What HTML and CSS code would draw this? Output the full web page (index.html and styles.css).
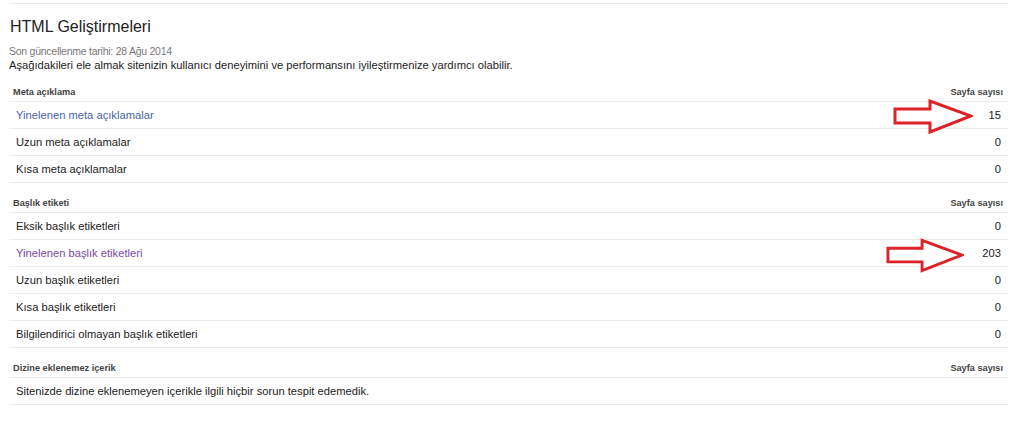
FILE: index.html
```html
<!DOCTYPE html>
<html lang="tr">
<head>
    <meta charset="UTF-8">
    <meta name="viewport" content="width=device-width, initial-scale=1.0">
    <title>HTML Geliştirmeleri</title>
    <link rel="stylesheet" href="styles.css">
</head>
<body>
    <div class="page">
        <h1>HTML Geliştirmeleri</h1>
        <div class="updated">Son güncellenme tarihi: 28 Ağu 2014</div>
        <div class="intro">Aşağıdakileri ele almak sitenizin kullanıcı deneyimini ve performansını iyileştirmenize yardımcı olabilir.</div>

        <div class="section">
            <div class="head">
                <span>Meta açıklama</span>
                <span>Sayfa sayısı</span>
            </div>
            <div class="row">
                <a class="link" href="#">Yinelenen meta açıklamalar</a>
                <span class="count">15</span>
                <svg class="arrow arrow-one" viewBox="0 0 80 36" width="80" height="36">
                    <polygon points="2,10 37,10 37,2 78,17 37,33 37,24 2,24" />
                </svg>
            </div>
            <div class="row">
                <span>Uzun meta açıklamalar</span>
                <span class="count">0</span>
            </div>
            <div class="row">
                <span>Kısa meta açıklamalar</span>
                <span class="count">0</span>
            </div>
        </div>

        <div class="section">
            <div class="head">
                <span>Başlık etiketi</span>
                <span>Sayfa sayısı</span>
            </div>
            <div class="row">
                <span>Eksik başlık etiketleri</span>
                <span class="count">0</span>
            </div>
            <div class="row">
                <a class="link visited" href="#">Yinelenen başlık etiketleri</a>
                <span class="count">203</span>
                <svg class="arrow arrow-two" viewBox="0 0 80 36" width="78" height="36">
                    <polygon points="2,10 37,10 37,2 78,17 37,33 37,24 2,24" />
                </svg>
            </div>
            <div class="row">
                <span>Uzun başlık etiketleri</span>
                <span class="count">0</span>
            </div>
            <div class="row">
                <span>Kısa başlık etiketleri</span>
                <span class="count">0</span>
            </div>
            <div class="row">
                <span>Bilgilendirici olmayan başlık etiketleri</span>
                <span class="count">0</span>
            </div>
        </div>

        <div class="section">
            <div class="head">
                <span>Dizine eklenemez içerik</span>
                <span>Sayfa sayısı</span>
            </div>
            <div class="row">
                <span>Sitenizde dizine eklenemeyen içerikle ilgili hiçbir sorun tespit edemedik.</span>
            </div>
        </div>
    </div>
</body>
</html>
```

FILE: styles.css
```css
body {
    font-family: "Liberation Sans", Arial, sans-serif;
    margin: 0;
    padding: 0;
    background-color: #fff;
    color: #222;
}
.page {
    margin: 3px 16px 0 9px;
    border-top: 1px solid #ebebeb;
}
h1 {
    font-size: 16px;
    font-weight: normal;
    line-height: 22px;
    margin: 12px 0 0 1px;
    color: #222;
}
.updated {
    margin-top: 6px;
    font-size: 10.5px;
    letter-spacing: -0.25px;
    line-height: 14px;
    color: #777;
}
.intro {
    font-size: 11.2px;
    line-height: 14px;
}
.section {
    margin-top: 13px;
}
.head {
    display: flex;
    justify-content: space-between;
    padding: 0 5px 2px 4px;
    font-size: 9.2px;
    font-weight: bold;
    line-height: 14px;
    color: #444;
    border-bottom: 1px solid #ebebeb;
}
.row {
    position: relative;
    display: flex;
    justify-content: space-between;
    padding: 6px 7px 6px 7px;
    font-size: 11.2px;
    line-height: 14px;
    border-bottom: 1px solid #ebebeb;
}
.link {
    color: #4465a9;
    text-decoration: none;
}
.link.visited {
    color: #7b48a8;
}
.count {
    text-align: right;
}
.arrow {
    position: absolute;
}
.arrow polygon {
    fill: #fff;
    stroke: #dd2229;
    stroke-width: 3;
}
.arrow-one {
    top: -3px;
    right: 35px;
}
.arrow-two {
    top: -2px;
    right: 44px;
}
```
